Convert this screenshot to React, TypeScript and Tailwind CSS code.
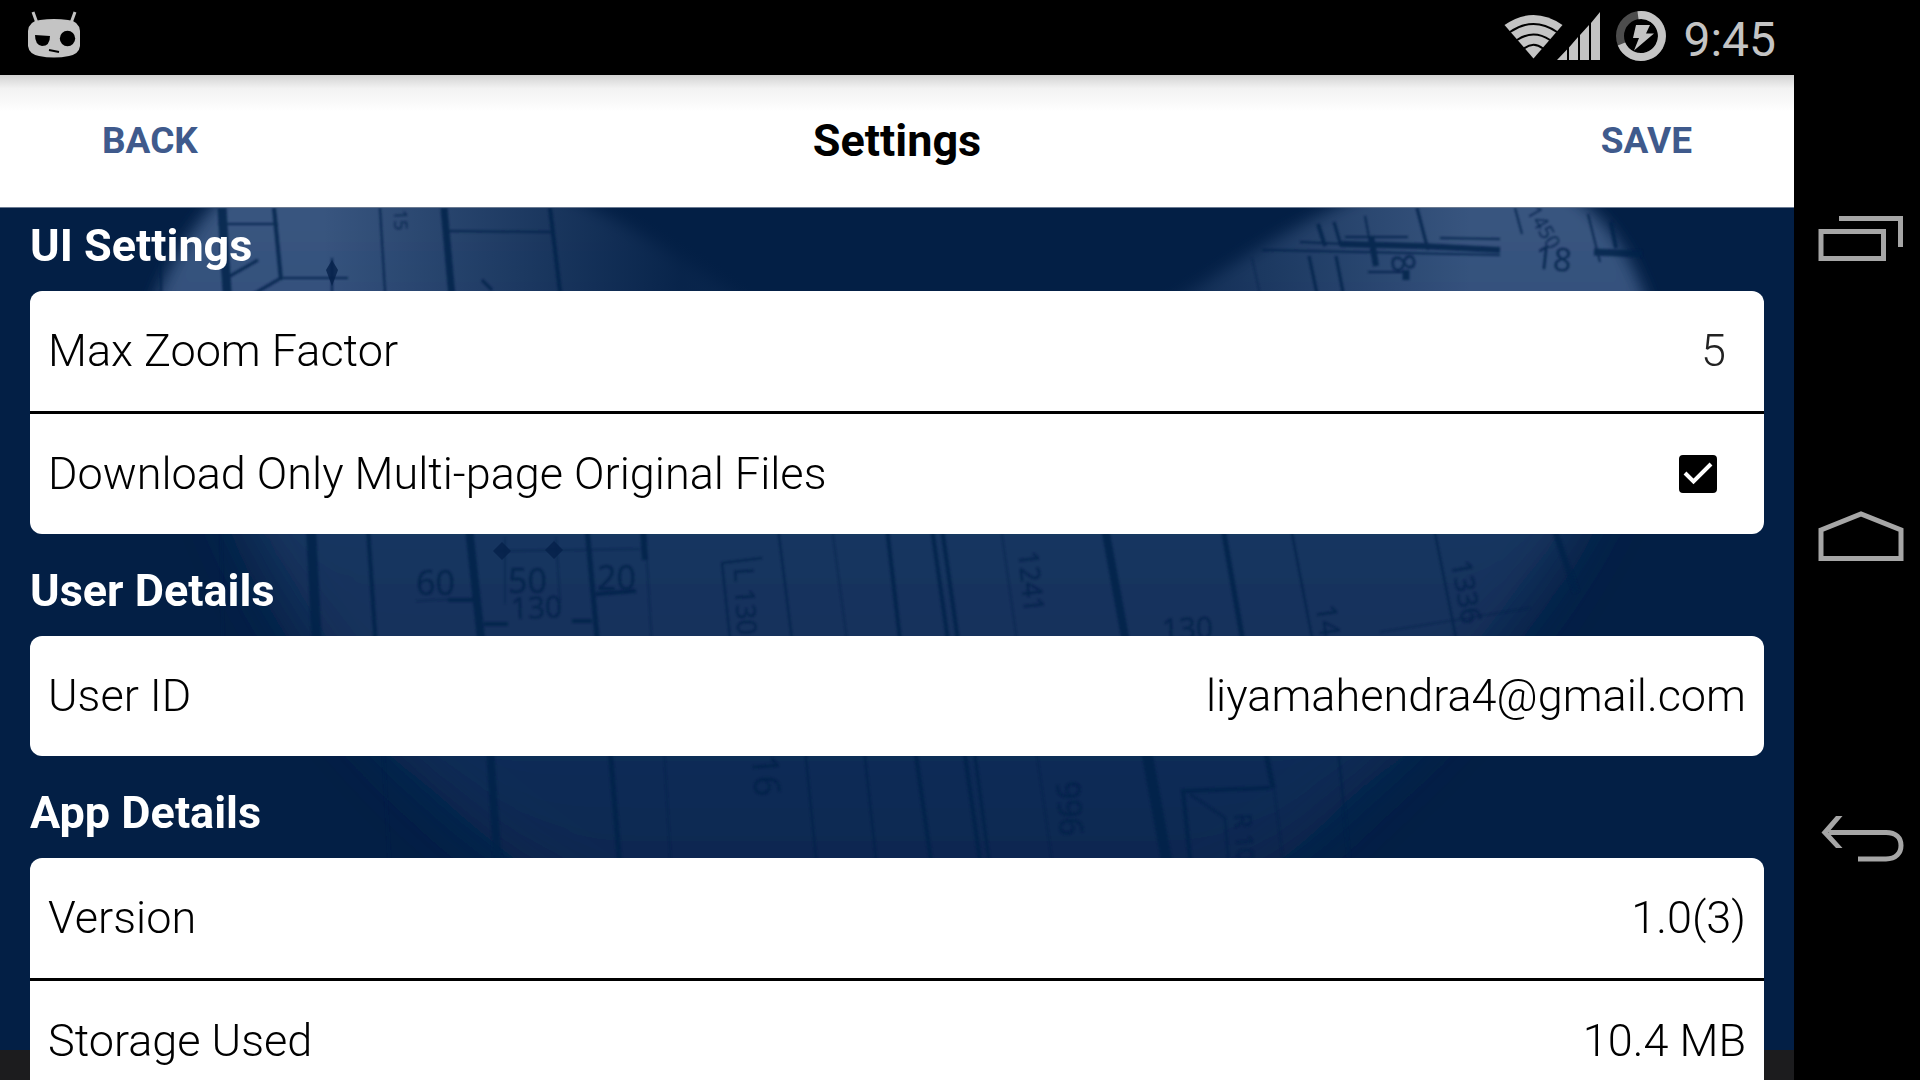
import { useState } from "react";
import type { ReactNode } from "react";

const verticals = [
  // [x1, y1, x2, y2, width]
  [160, 30, 161, 90, 2],
  [222, 0, 228, 100, 9],
  [274, 0, 281, 72, 4],
  [380, 0, 386, 100, 2],
  [444, 0, 453, 100, 7],
  [550, 0, 562, 100, 4],
  [221, 320, 223, 440, 1],
  [311, 320, 317, 440, 10],
  [368, 320, 376, 440, 4],
  [469, 320, 482, 440, 8],
  [587, 320, 598, 440, 5],
  [643, 320, 645, 352, 6],
  [645, 320, 652, 440, 1],
  [778, 320, 793, 440, 2],
  [832, 320, 848, 440, 1],
  [887, 320, 901, 440, 4],
  [932, 320, 949, 440, 4],
  [942, 320, 959, 440, 4],
  [1001, 320, 1018, 440, 1],
  [1105, 320, 1127, 440, 8],
  [1223, 320, 1244, 440, 5],
  [1291, 320, 1314, 440, 2],
  [1434, 320, 1458, 440, 2],
  [1554, 320, 1576, 384, 6],
  [383, 540, 390, 660, 1],
  [490, 540, 498, 660, 8],
  [610, 540, 620, 660, 5],
  [664, 540, 671, 660, 1],
  [805, 540, 817, 660, 2],
  [864, 540, 877, 660, 2],
  [915, 540, 932, 660, 4],
  [964, 540, 981, 660, 4],
  [974, 540, 990, 660, 3],
  [1036, 540, 1053, 660, 1],
  [1146, 540, 1168, 660, 11],
  [1265, 540, 1273, 580, 5],
  [1274, 580, 1284, 660, 1],
  [1338, 540, 1350, 660, 2],
  [1252, 50, 1263, 100, 1],
  [1309, 48, 1320, 100, 3],
  [1336, 48, 1346, 100, 3],
  [1318, 16, 1325, 38, 4],
  [1334, 14, 1341, 38, 3],
  [1365, 8, 1374, 56, 2],
  [1371, 28, 1376, 58, 6],
  [1417, 0, 1428, 42, 3],
  [1515, 0, 1522, 26, 2],
  [1588, 6, 1600, 54, 2],
  [1611, 14, 1616, 40, 4],
];

const notes = [
  { label: "15", x: 394, y: 2, size: 18, angle: 88 },
  { label: "60", x: 416, y: 387, size: 34, angle: 0 },
  { label: "50", x: 508, y: 385, size: 34, angle: 0 },
  { label: "20", x: 597, y: 382, size: 34, angle: 0 },
  { label: "130", x: 511, y: 411, size: 30, angle: -2 },
  { label: "L 130 x", x: 734, y: 360, size: 27, angle: 87 },
  { label: "1241", x: 1018, y: 344, size: 27, angle: 84 },
  { label: "130", x: 1162, y: 432, size: 30, angle: -2 },
  { label: "14", x: 1316, y: 398, size: 28, angle: 82 },
  { label: "1336", x: 1451, y: 354, size: 28, angle: 80 },
  { label: "16", x: 752, y: 548, size: 36, angle: 86 },
  { label: "996", x: 1056, y: 574, size: 32, angle: 86 },
  { label: "R 10", x: 1234, y: 606, size: 24, angle: 86 },
  { label: "1450", x: 1526, y: 3, size: 20, angle: 60 },
  { label: "18", x: 1534, y: 60, size: 32, angle: 6 },
  { label: "8", x: 1390, y: 48, size: 32, angle: 80 },
];

function Blueprint() {
  return (
    <svg
      className="absolute inset-x-0 top-0 h-[842px] w-full bg-[#031f45]"
      viewBox="0 0 1794 842"
      preserveAspectRatio="xMidYMin slice"
      aria-hidden="true"
    >
      <defs>
        <linearGradient id="paper" x1="0" y1="0" x2="0" y2="720" gradientUnits="userSpaceOnUse">
          <stop offset="0" stopColor="#38557f" />
          <stop offset="0.14" stopColor="#34507c" />
          <stop offset="0.46" stopColor="#18355f" />
          <stop offset="0.75" stopColor="#112d57" />
          <stop offset="1" stopColor="#08244c" />
        </linearGradient>
        <linearGradient id="middle" x1="0" y1="0" x2="1794" y2="0" gradientUnits="userSpaceOnUse">
          <stop offset="0.18" stopColor="#031f45" stopOpacity="0" />
          <stop offset="0.38" stopColor="#031f45" stopOpacity="0.9" />
          <stop offset="0.66" stopColor="#031f45" stopOpacity="0.7" />
          <stop offset="0.82" stopColor="#031f45" stopOpacity="0" />
        </linearGradient>
        <filter id="soft" x="-10%" y="-10%" width="120%" height="120%">
          <feGaussianBlur stdDeviation="8" />
        </filter>
        <filter id="haze" x="-30%" y="-30%" width="160%" height="160%">
          <feGaussianBlur stdDeviation="30" />
        </filter>
        <filter id="ink">
          <feGaussianBlur stdDeviation="0.8" />
        </filter>
        <clipPath id="upper">
          <rect width="1794" height="200" />
        </clipPath>
        <clipPath id="lower">
          <rect y="200" width="1794" height="642" />
        </clipPath>
      </defs>
      <g clipPath="url(#upper)">
        <g filter="url(#soft)">
          <path d="M130 200C145 90 175 30 250-40H500C590-10 690 50 780 120V260H130Z" fill="url(#paper)" />
          <path d="M1130 260V120C1230 60 1280 20 1400-30H1540C1610 0 1650 60 1672 200V260Z" fill="url(#paper)" />
        </g>
        <rect width="1794" height="200" fill="url(#middle)" />
      </g>
      <g clipPath="url(#lower)">
        <path
          d="M200 150H1630C1600 330 1500 450 1350 590C1290 650 1230 700 1100 740H650C480 640 260 480 200 150Z"
          fill="url(#paper)"
          filter="url(#haze)"
        />
      </g>
      <g stroke="#05214a" fill="none" opacity="0.8" filter="url(#ink)">
        {verticals.map(([x1, y1, x2, y2, width], i) => (
          <path key={i} d={`M${x1} ${y1}L${x2} ${y2}`} strokeWidth={width} />
        ))}
        <path d="M281 70L250 88M230 68L258 52M482 72L492 82" strokeWidth="3" />
        <path d="M218 16H278M283 70H348M332 50V90M446 23L552 24" strokeWidth="2" />
        <path d="M1340 36L1420 38L1500 42" strokeWidth="6" />
        <path d="M1262 42L1500 47M1300 34L1345 36M1345 29H1408M1440 30L1500 31M1368 64H1408" strokeWidth="2" />
        <path d="M1406 62V72M1594 44L1642 46" strokeWidth="7" />
        <path d="M505 330V396M556 330L560 394M496 343L640 341M416 393L476 390M1380 424L1530 400" strokeWidth="1" />
        <path d="M448 392H476M596 386L636 383M484 416H508M572 413H592" strokeWidth="4" />
        <path d="M722 355L762 350M722 355L731 440M1190 586L1225 610L1229 660" strokeWidth="2" />
        <path d="M1270 580L1183 583L1191 660" strokeWidth="4" />
      </g>
      <path
        d="M332 52L338 62L332 78L326 62ZM502 334L511 343L502 352L493 343ZM554 333L563 342L554 351L545 342Z"
        fill="#05214a"
        opacity="0.8"
      />
      <g className="font-['Open_Sans',sans-serif]" fill="#05214a" opacity="0.85" filter="url(#ink)">
        {notes.map((note, i) => (
          <text key={i} fontSize={note.size} transform={`translate(${note.x} ${note.y}) rotate(${note.angle})`}>
            {note.label}
          </text>
        ))}
      </g>
    </svg>
  );
}

function StatusBar() {
  return (
    <div className="flex h-[75px] shrink-0 items-center justify-between bg-black pr-[18px] pl-7">
      <svg className="h-[75px] w-[52px]" viewBox="28 0 52 75" aria-hidden="true">
        <path d="M33 12L37 23M75 12L71 23" stroke="#c4c4c4" strokeWidth="3" />
        <path
          d="M40 20Q54 18 68 20Q79 21 80 31V46Q79 54 69 56Q54 59 39 56Q29 54 28 46V31Q29 21 40 20Z"
          fill="#c4c4c4"
        />
        <path d="M35 35L50 36Q50 46 42 46Q35 45 35 35Z" fill="#000" />
        <circle cx="67.500" cy="38.500" r="7.700" fill="#000" />
        <path d="M49 50L59 52" stroke="#000" strokeWidth="2" />
      </svg>
      <div className="flex items-center gap-4">
        <svg className="h-[75px] w-[164px]" viewBox="1502 0 164 75" aria-hidden="true">
          <path d="M1503.500 25Q1532.500 5 1561.500 25L1532.500 58.500Z" fill="#c4c4c4" />
          <path
            d="M1509 32Q1532.500 16 1556 32M1516 40Q1532.500 29 1549 40M1523 48.500Q1532.500 41 1542 48.500"
            stroke="#000"
            strokeWidth="2"
            fill="none"
          />
          <path d="M1556 60L1566 49.500V60ZM1568 47.500L1577 37V60H1568ZM1579 35L1588 25V60H1579ZM1590 23L1599 12V60H1590Z" fill="#c4c4c4" />
          <circle cx="1640" cy="36" r="21" fill="none" stroke="#4c4c4c" strokeWidth="8" />
          <path d="M1637 15.200A21 21 0 1 1 1620.500 44" fill="none" stroke="#c4c4c4" strokeWidth="8" />
          <path d="M1635 25H1649L1645 33.500H1653L1633 50.500L1638 38H1632Z" fill="#c4c4c4" />
        </svg>
        <time className="pt-1 font-['Roboto',sans-serif] text-[48px] leading-[71px] text-[#c4c4c4]">9:45</time>
      </div>
    </div>
  );
}

function NavBar() {
  return (
    <nav className="flex w-[126px] shrink-0 flex-col items-center justify-center bg-black pl-2 text-[#a6a6a6]">
      <button aria-label="Recent apps" className="flex h-[300px] w-full items-center justify-center">
        <svg className="h-[52px] w-[86px]" viewBox="0 0 86 52" fill="none" stroke="currentColor" strokeWidth="5">
          <path d="M3 17.500H65.500V44.500H3ZM21 4.500H82.500V33" />
        </svg>
      </button>
      <button aria-label="Home" className="flex h-[300px] w-full items-center justify-center">
        <svg className="h-[58px] w-[86px]" viewBox="0 0 86 58" fill="none" stroke="currentColor" strokeWidth="5">
          <path d="M3 19L43 3L83 19V47.500H3Z" />
        </svg>
      </button>
      <button aria-label="Back" className="flex h-[300px] w-full items-center justify-center">
        <svg className="h-[48px] w-[86px]" viewBox="0 0 86 48" fill="none" stroke="currentColor" strokeWidth="5">
          <path d="M11 16.500H68C78 16.500 83 22 83 29.500S78 43 68 43H40" />
          <path d="M3.500 16.500L18 0H24.500L10.500 16.500L24.500 32H18Z" fill="currentColor" stroke="none" />
        </svg>
      </button>
    </nav>
  );
}

function Section({ title, children }: { title: string; children: ReactNode }) {
  return (
    <section>
      <h2 className="mb-[18px] text-[45px] leading-[54px] font-bold text-white">{title}</h2>
      <div className="divide-y-[3px] divide-black overflow-hidden rounded-xl bg-white">{children}</div>
    </section>
  );
}

function Row({ label, value }: { label: string; value: string }) {
  return (
    <div className="box-content flex h-[120px] items-center justify-between px-[18px]">
      <span>{label}</span>
      <span>{value}</span>
    </div>
  );
}

export default function App() {
  const [zoom, setZoom] = useState("5");
  const [multiPage, setMultiPage] = useState(true);

  return (
    <div className="flex h-screen overflow-hidden bg-black font-['Roboto',sans-serif]">
      <div className="flex min-w-0 flex-1 flex-col">
        <StatusBar />
        <header className="grid h-[133px] shrink-0 grid-cols-3 items-center border-b border-[#6b7b92] bg-white bg-linear-to-b from-[#d2d2d2] via-[#f2f2f2] via-10% to-white to-28% px-[102px]">
          <button className="justify-self-start text-[37px] font-bold text-[#3f5a8c]">BACK</button>
          <h1 className="text-center text-[45px] font-bold text-black">Settings</h1>
          <button className="justify-self-end text-[37px] font-bold text-[#3f5a8c]">SAVE</button>
        </header>
        <main className="relative flex-1 overflow-hidden bg-[#1c1c1e]">
          <Blueprint />
          <div className="relative flex flex-col gap-[30px] px-[30px] pt-[11px] text-[45px] font-light text-black">
            <Section title="UI Settings">
              <div className="box-content flex h-[120px] items-center justify-between pr-[38px] pl-[18px]">
                <label htmlFor="zoom">Max Zoom Factor</label>
                <input
                  id="zoom"
                  className="w-[200px] text-right text-[#222] outline-none"
                  inputMode="numeric"
                  value={zoom}
                  onChange={(e) => setZoom(e.target.value)}
                />
              </div>
              <div className="box-content flex h-[120px] items-center justify-between pr-[47px] pl-[18px]">
                <label htmlFor="multi-page">Download Only Multi-page Original Files</label>
                <span className="relative flex size-[38px]">
                  <input
                    id="multi-page"
                    type="checkbox"
                    className="peer size-full appearance-none rounded border-4 border-black checked:bg-black"
                    checked={multiPage}
                    onChange={(e) => setMultiPage(e.target.checked)}
                  />
                  <svg
                    className="pointer-events-none absolute inset-0 hidden size-full peer-checked:block"
                    viewBox="0 0 38 38"
                    fill="none"
                    stroke="#fff"
                    strokeWidth="4"
                    aria-hidden="true"
                  >
                    <path d="M6 18L14.500 26.500L32 9" />
                  </svg>
                </span>
              </div>
            </Section>
            <Section title="User Details">
              <Row label="User ID" value="liyamahendra4@gmail.com" />
            </Section>
            <Section title="App Details">
              <Row label="Version" value="1.0(3)" />
              <Row label="Storage Used" value="10.4 MB" />
            </Section>
          </div>
        </main>
      </div>
      <NavBar />
    </div>
  );
}
